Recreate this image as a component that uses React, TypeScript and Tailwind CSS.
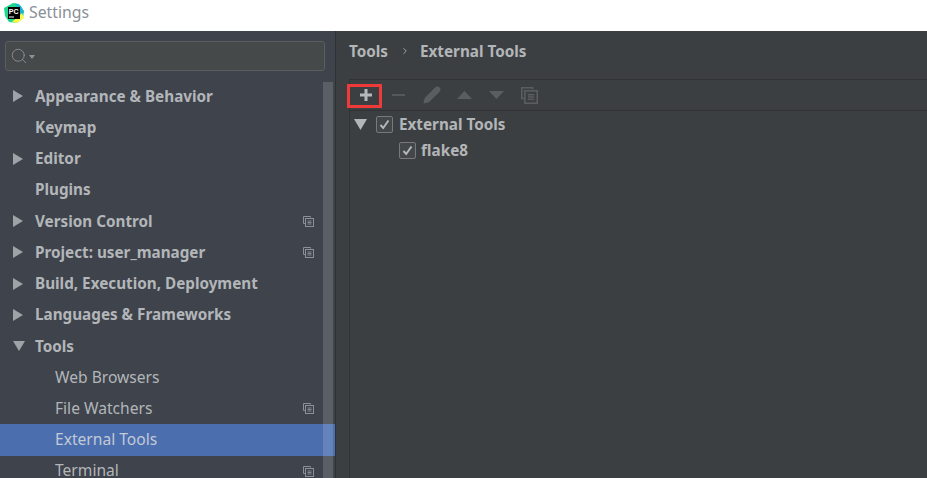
import React from "react";
import { ChevronRight, Pencil, Search } from "lucide-react";

type NavItem = {
  label: string;
  arrow?: "right" | "down";
  child?: boolean;
  copy?: boolean;
  selected?: boolean;
};

const items: NavItem[] = [
  { label: "Appearance & Behavior", arrow: "right" },
  { label: "Keymap" },
  { label: "Editor", arrow: "right" },
  { label: "Plugins" },
  { label: "Version Control", arrow: "right", copy: true },
  { label: "Project: user_manager", arrow: "right", copy: true },
  { label: "Build, Execution, Deployment", arrow: "right" },
  { label: "Languages & Frameworks", arrow: "right" },
  { label: "Tools", arrow: "down" },
  { label: "Web Browsers", child: true },
  { label: "File Watchers", child: true, copy: true },
  { label: "External Tools", child: true, selected: true },
  { label: "Terminal", child: true, copy: true },
];

const PcLogo = () => (
  <svg width="20" height="20" viewBox="0 0 20 20" className="shrink-0">
    <path d="M0 5 L9 0 L15 1 L20 8 L19 15 L13 20 L5 19 L1 13 Z" fill="#21d789" />
    <path d="M11 0 L17 3 L20 9 L17 13 Z" fill="#19b5d6" />
    <path d="M8 19 L18 10 L20 15 L13 20 Z" fill="#fcf84a" />
    <rect x="4" y="4" width="12" height="12" fill="#000" />
    <text x="4.8" y="10.5" fontSize="7" fontWeight="700" fill="#fff" fontFamily="'Liberation Sans', sans-serif">
      PC
    </text>
    <rect x="5" y="13.5" width="5" height="1" fill="#fff" />
  </svg>
);

const Triangle = ({
  dir,
  color = "#9fa2a6",
  width = 11,
  height = 12,
}: {
  dir: "right" | "down" | "up";
  color?: string;
  width?: number;
  height?: number;
}) => {
  const points = {
    right: `0,0 ${width},${height / 2} 0,${height}`,
    down: `0,0 ${width},0 ${width / 2},${height}`,
    up: `0,${height} ${width},${height} ${width / 2},0`,
  }[dir];
  return (
    <svg width={width} height={height} viewBox={`0 0 ${width} ${height}`} className="shrink-0">
      <polygon points={points} fill={color} />
    </svg>
  );
};

const CopyIcon = ({ size = 11, color = "#8a9199" }: { size?: number; color?: string }) => (
  <svg width={size} height={size} viewBox="0 0 11 11" fill="none" className="shrink-0">
    <path d="M7.5 1.5 V0.5 H0.5 V7.5 H2" stroke={color} />
    <rect x="2.5" y="2.5" width="8" height="8" stroke={color} />
    <path d="M4.5 5 H8.5 M4.5 6.5 H8.5 M4.5 8 H8.5" stroke={color} strokeWidth="0.9" />
  </svg>
);

const TreeCheckbox = () => (
  <div className="flex h-[17px] w-[17px] shrink-0 items-center justify-center rounded-[2px] border border-[#77797b] bg-[#43474a]">
    <svg width="11" height="11" viewBox="0 0 11 11" fill="none">
      <path d="M1.5 6 L4.2 9 L9.5 1.5" stroke="#b4b7b9" strokeWidth="2" />
    </svg>
  </div>
);

const Sidebar = () => (
  <aside className="relative flex w-[335px] shrink-0 flex-col overflow-hidden bg-[#3e434c]">
    <div className="mx-[5px] mt-[10px] flex h-[30px] w-[320px] shrink-0 items-center rounded-[3px] border border-[#5a5e5f] bg-[#45494a] pl-[4px]">
      <Search size={18} strokeWidth={1.2} color="#8d9193" />
      <svg width="6" height="4" viewBox="0 0 6 4" className="ml-[1px] mt-[1px]">
        <polygon points="0,0 6,0 3,4" fill="#8d9193" />
      </svg>
    </div>

    <nav className="mt-[9.5px] flex flex-col">
      {items.map((item) => (
        <div
          key={item.label}
          className={`flex h-[31.25px] shrink-0 items-center pr-[21px] ${
            item.selected ? "bg-[#4b6eaf]" : ""
          } ${item.child ? "pl-[55px] text-[15.6px] font-normal" : "pl-[13px] text-[15.25px] font-bold"} ${
            item.selected ? "text-[#c3cad6]" : "text-[#b3b6b9]"
          }`}
        >
          {!item.child && (
            <div className="flex w-[22px] shrink-0 items-center">
              {item.arrow === "right" && <Triangle dir="right" width={10} height={12} />}
              {item.arrow === "down" && <Triangle dir="down" width={12} height={10} />}
            </div>
          )}
          <span className="-translate-y-[0.5px] flex-1 whitespace-nowrap">{item.label}</span>
          {item.copy && <CopyIcon />}
        </div>
      ))}
    </nav>

    {/* Scrollbar lies over the rows */}
    <div className="absolute bottom-0 right-[2px] top-[51px] w-[10px] bg-white/15" />
  </aside>
);

const Toolbar = () => (
  <div className="relative flex h-[31px] items-center border-b border-[#323232]">
    <div className="flex w-[32px] items-center justify-center">
      <svg width="14" height="14" viewBox="0 0 14 14">
        <path d="M5.5 1 H8.5 V5.5 H13 V8.5 H8.5 V13 H5.5 V8.5 H1 V5.5 H5.5 Z" fill="#b5b8ba" />
      </svg>
    </div>
    <div className="flex w-[33px] items-center justify-center">
      <div className="h-[2px] w-[13px] bg-[#55585a]" />
    </div>
    <div className="flex w-[33px] items-center justify-center">
      <Pencil size={18} strokeWidth={2.4} color="#5b5e60" fill="#5b5e60" />
    </div>
    <div className="flex w-[32px] items-center justify-center">
      <Triangle dir="up" color="#5b5e60" width={15} height={8} />
    </div>
    <div className="flex w-[32px] items-center justify-center">
      <Triangle dir="down" color="#5b5e60" width={15} height={8} />
    </div>
    <div className="flex w-[34px] items-center justify-center">
      <CopyIcon size={17} color="#5b5e60" />
    </div>
    {/* Red annotation round the add button */}
    <div className="absolute left-[-3px] top-[4px] h-[24px] w-[35px] border-[3px] border-[#f03a3a]" />
  </div>
);

const Content = () => (
  <main className="flex min-w-0 flex-1 flex-col border-l border-[#2f3133] bg-[#3c3f41] pl-[13px]">
    <div className="flex h-[48px] shrink-0 items-center pb-[8px] text-[15.25px] font-bold text-[#b3b6b9]">
      <span>Tools</span>
      <ChevronRight size={10} strokeWidth={2} className="ml-[12px] mr-[10px]" />
      <span>External Tools</span>
    </div>
    <div className="flex flex-1 flex-col border-l border-t border-[#323232]">
      <Toolbar />
      <div className="flex flex-col pl-[4px] text-[15.25px] font-bold text-[#b3b6b9]">
        <div className="flex h-[26px] items-center">
          <Triangle dir="down" color="#b3b6b9" width={13} height={11} />
          <div className="ml-[9px] flex items-center gap-[6px]">
            <TreeCheckbox />
            <span>External Tools</span>
          </div>
        </div>
        <div className="flex h-[26px] items-center pl-[45px]">
          <div className="flex items-center gap-[5px]">
            <TreeCheckbox />
            <span>flake8</span>
          </div>
        </div>
      </div>
    </div>
  </main>
);

export default function App() {
  return (
    <div className="flex h-[478px] w-[927px] flex-col overflow-hidden bg-white font-['Noto_Sans','Open_Sans',sans-serif]">
      <header className="flex h-[31px] shrink-0 items-center gap-[5px] pl-[4px] pb-[5px]">
        <PcLogo />
        <span className="text-[15.8px] text-[#8a8f98]">Settings</span>
      </header>
      <div className="flex min-h-0 flex-1">
        <Sidebar />
        <Content />
      </div>
    </div>
  );
}
